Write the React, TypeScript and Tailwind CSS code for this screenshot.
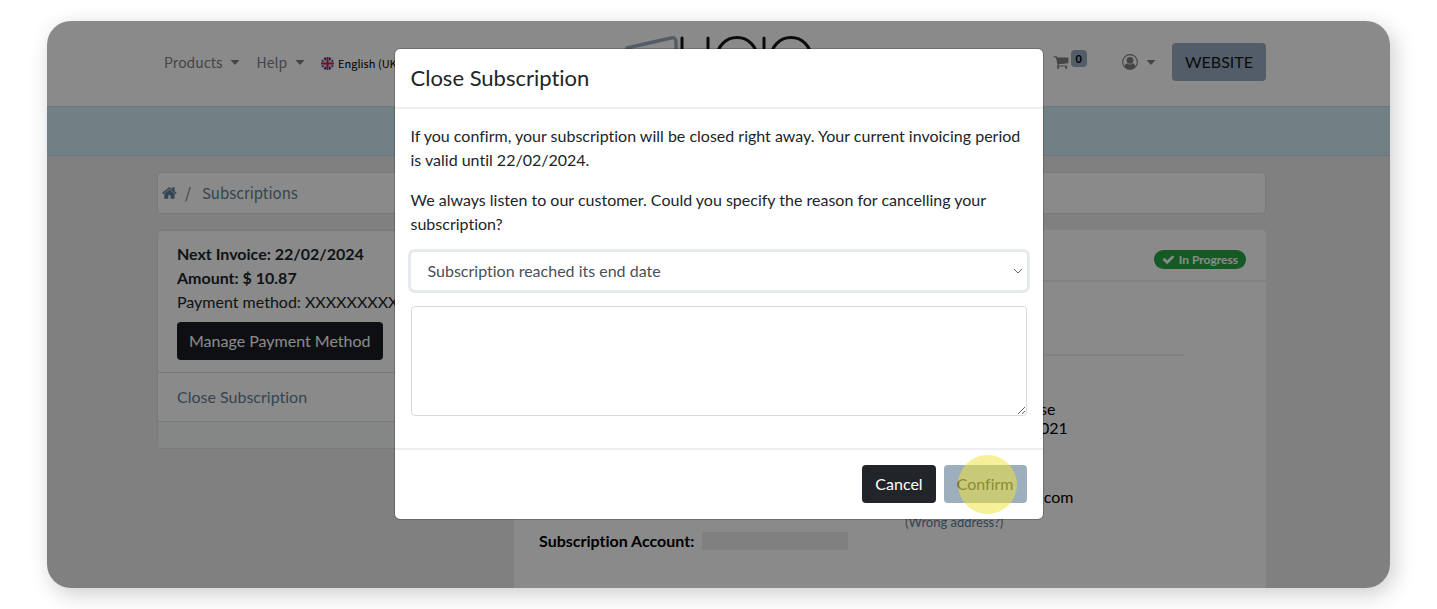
import type { ReactNode } from "react";

const iconPaths = {
  home: "M1408 992v480q0 26-19 45t-45 19h-384v-384h-256v384h-384q-26 0-45-19t-19-45v-480q0-1 .5-3t.5-3l575-474 575 474q1 2 1 6zm223-69l-62 74q-8 9-21 11h-3q-13 0-21-7l-692-577-692 577q-12 8-24 7-13-2-21-11l-62-74q-8-10-7-23.5t11-21.5l719-599q32-26 76-26t76 26l244 204v-195q0-14 9-23t23-9h192q14 0 23 9t9 23v408l219 182q10 8 11 21.5t-7 23.5z",
  cart: "M704 1536q0 52-38 90t-90 38-90-38-38-90 38-90 90-38 90 38 38 90zm896 0q0 52-38 90t-90 38-90-38-38-90 38-90 90-38 90 38 38 90zm128-1088v512q0 24-16.5 42.5t-40.5 21.5l-1044 122q13 60 13 70 0 16-24 64h920q26 0 45 19t19 45-19 45-45 19h-1024q-26 0-45-19t-19-45q0-11 8-31.5t16-36 21.5-40 15.5-29.5l-177-823h-204q-26 0-45-19t-19-45 19-45 45-19h256q16 0 28.5 6.5t19.5 15.5 13 24.5 8 26 5.5 29.5 4.5 26h1201q26 0 45 19t19 45z",
  check:
    "M1671 566q0 40-28 68l-724 724-136 136q-28 28-68 28t-68-28l-136-136-362-362q-28-28-28-68t28-68l136-136q28-28 68-28t68 28l294 295 656-657q28-28 68-28t68 28l136 136q28 28 28 68z",
};

function Icon({ name, className }: { name: keyof typeof iconPaths; className: string }) {
  return (
    <svg viewBox="0 0 1792 1792" fill="currentColor" aria-hidden="true" className={className}>
      <path d={iconPaths[name]} />
    </svg>
  );
}

function Caret() {
  return (
    <svg viewBox="0 0 10 5" fill="currentColor" aria-hidden="true" className="h-[5px] w-[10px]">
      <path d="M0.5 0h9L5 5z" />
    </svg>
  );
}

function UserIcon() {
  return (
    <svg viewBox="0 0 16 16" aria-hidden="true" className="size-4">
      <circle cx="8" cy="8" r="7.4" fill="none" stroke="currentColor" strokeWidth="1.1" />
      <circle cx="8" cy="6.3" r="3.4" fill="currentColor" />
      <path
        d="M5.2 9.2C3.6 9.6 2.7 10.9 2.5 12.7A7 7 0 0 0 8 15.2a7 7 0 0 0 5.5-2.5C13.3 10.9 12.4 9.6 10.8 9.2A4.3 4.3 0 0 1 5.2 9.2z"
        fill="currentColor"
      />
    </svg>
  );
}

function FlagIcon() {
  return (
    <svg viewBox="0 0 26 26" aria-hidden="true" className="size-[13px]">
      <clipPath id="flag">
        <circle cx="13" cy="13" r="13" />
      </clipPath>
      <g clipPath="url(#flag)">
        <path d="M0 0h26v26H0z" fill="#e8e4ec" />
        <path
          d="M0 9V2l7 7zM2 0h8v8zM16 0h8l-8 8zM26 2v7h-7zM0 17h7l-7 7zM10 18v8H2zM16 18l8 8h-8zM19 17h7v7z"
          fill="#1e3a96"
        />
        <path d="M11 0h4v11h11v4H15v11h-4V15H0v-4h11z" fill="#dd1734" />
      </g>
    </svg>
  );
}

function Logo() {
  return (
    <svg viewBox="4 -1 198 56" fill="none" strokeLinecap="round" aria-label="Logo" className="w-[198px] shrink-0">
      <path d="M15 13L59 3q5-1 5 4v40L15 36z" stroke="#9aadbf" strokeWidth="3.5" strokeLinejoin="round" />
      <path d="M70 3v26a13 13 0 0 0 26 0V3M152 3v38" stroke="#151515" strokeWidth="3" />
      <circle cx="125" cy="22.5" r="20" stroke="#151515" strokeWidth="3" />
      <circle cx="179" cy="22.5" r="20" stroke="#151515" strokeWidth="3" />
    </svg>
  );
}

function NavMenu({ label, children }: { label: string; children?: ReactNode }) {
  return (
    <button type="button" aria-label={label} className="flex items-center gap-2">
      {children}
      <Caret />
    </button>
  );
}

function Header() {
  return (
    <header className="h-[85px] bg-white pr-[124px] pb-[3px] pl-[110px]">
      <div className="flex h-full items-center text-[#808080]">
        <nav className="flex flex-1 items-center gap-4 pl-[7px] font-['Noto_Sans_CJK_SC',sans-serif] text-sm">
          <NavMenu label="Products">Products</NavMenu>
          <NavMenu label="Help">Help</NavMenu>
          <button type="button" className="flex items-center gap-1 pt-1 text-[11px] whitespace-nowrap text-black">
            <FlagIcon />
            English (UK)
          </button>
        </nav>
        <Logo />
        <div className="flex flex-1 items-center justify-end">
          <a href="#cart" aria-label="Cart" className="flex items-center gap-[2px]">
            <Icon name="cart" className="size-4" />
            <span className="mb-[7px] rounded bg-[#9aadbf] px-[5px] text-[11px] leading-[17px] font-bold text-black">
              0
            </span>
          </a>
          <div className="mr-4 ml-[35px] flex">
            <NavMenu label="Account">
              <UserIcon />
            </NavMenu>
          </div>
          <a href="#website" className="rounded bg-[#9aadbf] px-[13px] py-[7px] text-[#151515]">
            WEBSITE
          </a>
        </div>
      </div>
    </header>
  );
}

function InvoiceCard() {
  return (
    <aside className="w-[328px] shrink-0 rounded border border-[#dfe1e3] bg-white">
      <div className="px-[19px] pt-[11px] pb-3 whitespace-nowrap text-[#212529]">
        <p className="font-bold">Next Invoice: 22/02/2024</p>
        <p className="font-bold">Amount: $ 10.87</p>
        <p className="overflow-hidden">Payment method: XXXXXXXXXX</p>
        <button type="button" className="mt-2 block rounded bg-[#1b1c22] px-3 py-[7px] text-white">
          Manage Payment Method
        </button>
      </div>
      <div className="border-y border-[#dfe1e3] px-[19px] py-3">
        <a href="#close" className="text-[#5f8098]">
          Close Subscription
        </a>
      </div>
      <div className="h-[26px] bg-[#f5faf8]" />
    </aside>
  );
}

function SubscriptionCard() {
  return (
    <section className="min-h-[420px] flex-1 rounded bg-white text-black">
      <div className="flex justify-end border-b-2 border-[#f0f0f0] px-5 pt-5 pb-[11px]">
        <span className="flex items-center gap-1 rounded-full bg-[#28a745] px-[8px] text-xs leading-[19px] font-bold text-white">
          <Icon name="check" className="size-[13px]" />
          In Progress
        </span>
      </div>
      <div className="mr-[82px] ml-[25px] border-b-2 border-[#f0f0f0] pt-[72px]" />
      <div className="pt-[43px] pl-[391px]">
        <address className="pl-[135px] leading-[19px] not-italic">
          <p>se</p>
          <p>021</p>
          <p className="pt-[50px]">.com</p>
        </address>
        <a href="#address" className="block pt-[6px] text-[13px] leading-5 text-[#5f8098]">
          (Wrong address?)
        </a>
      </div>
      <p className="flex items-center gap-2 pl-[25px] leading-[18px] font-bold">
        Subscription Account:
        <span className="h-[18px] w-[146px] bg-[#ececee]" />
      </p>
    </section>
  );
}

function CloseDialog() {
  return (
    <div className="absolute inset-0 bg-black/46 px-4 pt-[28px]">
      <div
        role="dialog"
        aria-labelledby="dialog-title"
        className="mx-auto max-w-[648px] rounded-[5px] bg-white text-[#212529] outline outline-black/20"
      >
        <h2 id="dialog-title" className="border-b-2 border-[#eeeff0] px-4 py-[14px] text-[22px] leading-[30px]">
          Close Subscription
        </h2>
        <div className="px-4 pt-[15px] pb-8">
          <p className="mb-4">
            If you confirm, your subscription will be closed right away. Your current invoicing period is valid until
            22/02/2024.
          </p>
          <label htmlFor="reason" className="mb-4 block">
            We always listen to our customer. Could you specify the reason for cancelling your subscription?
          </label>
          <div className="relative mb-4">
            <select
              id="reason"
              className="block h-[38px] w-full appearance-none rounded bg-white px-[17px] text-[#495057] ring-3 ring-[#e5eaed] outline-none"
            >
              <option>Subscription reached its end date</option>
            </select>
            <svg
              viewBox="0 0 10 6"
              fill="none"
              stroke="#666"
              aria-hidden="true"
              className="pointer-events-none absolute top-4 right-1 w-[10px]"
            >
              <path d="M1 1l4 4 4-4" />
            </svg>
          </div>
          <textarea
            aria-label="Comments"
            className="block h-[110px] w-full rounded border border-[#d5dadd] outline-none"
          />
        </div>
        <div className="flex justify-end gap-2 border-t-2 border-[#eeeff0] px-4 pt-[15px] pb-4">
          <button type="button" className="rounded bg-[#212529] px-[13px] py-[7px] text-white">
            Cancel
          </button>
          <div className="relative">
            <button type="button" className="rounded bg-[#9daebd] px-[13px] py-[7px]">
              Confirm
            </button>
            <span className="pointer-events-none absolute -top-[10px] left-[14px] size-[59px] rounded-full bg-[#eee23c]/53" />
          </div>
        </div>
      </div>
    </div>
  );
}

export default function App() {
  return (
    <div className="h-screen bg-white px-[47px] py-[21px] font-[Lato,sans-serif] text-base [font-variant-ligatures:none]">
      <div className="relative h-full overflow-hidden rounded-3xl bg-[#ededed] shadow-[4px_6px_22px_rgba(0,0,0,0.2)]">
        <Header />
        <div className="h-[50px] border-y border-[#bfe0e6] bg-[#cfedf4]" />
        <main className="pt-4 pr-[124px] pl-[110px]">
          <nav
            aria-label="Breadcrumb"
            className="mb-4 flex items-center gap-[7px] rounded border border-[#dfe1e3] bg-white px-1 py-2 font-['Noto_Sans_CJK_SC',sans-serif] text-[15px] leading-6 text-[#5f8098]"
          >
            <a href="#home" aria-label="Home">
              <Icon name="home" className="size-4" />
            </a>
            <span className="text-[#6c757d]">/</span>
            <a href="#subscriptions" className="pl-1">
              Subscriptions
            </a>
          </nav>
          <div className="flex items-start gap-[29px]">
            <InvoiceCard />
            <SubscriptionCard />
          </div>
        </main>
        <CloseDialog />
      </div>
    </div>
  );
}
